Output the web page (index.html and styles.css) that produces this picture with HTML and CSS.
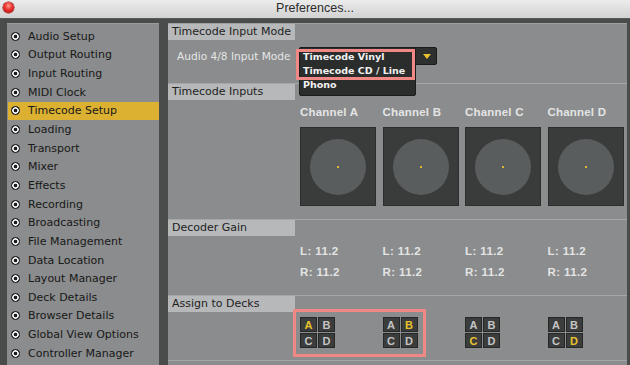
FILE: index.html
```html
<!DOCTYPE html>
<html>
<head>
<meta charset="utf-8">
<link rel="stylesheet" href="styles.css">
</head>
<body>
<div class="titlebar">
  <span class="close"></span>
  <span class="title">Preferences...</span>
</div>
<div class="main">
  <ul class="sidebar">
    <li><i class="radio"></i>Audio Setup</li>
    <li><i class="radio"></i>Output Routing</li>
    <li><i class="radio"></i>Input Routing</li>
    <li><i class="radio"></i>MIDI Clock</li>
    <li class="active"><i class="radio"></i>Timecode Setup</li>
    <li><i class="radio"></i>Loading</li>
    <li><i class="radio"></i>Transport</li>
    <li><i class="radio"></i>Mixer</li>
    <li><i class="radio"></i>Effects</li>
    <li><i class="radio"></i>Recording</li>
    <li><i class="radio"></i>Broadcasting</li>
    <li><i class="radio"></i>File Management</li>
    <li><i class="radio"></i>Data Location</li>
    <li><i class="radio"></i>Layout Manager</li>
    <li><i class="radio"></i>Deck Details</li>
    <li><i class="radio"></i>Browser Details</li>
    <li><i class="radio"></i>Global View Options</li>
    <li><i class="radio"></i>Controller Manager</li>
  </ul>
  <div class="content">
    <section class="sec sec-mode">
      <div class="sec-head">Timecode Input Mode</div>
      <div class="mode-row">
        <span class="mode-label">Audio 4/8 Input Mode</span>
        <div class="select">
          <span class="arrow"></span>
          <ul class="menu">
            <li>Timecode Vinyl</li>
            <li>Timecode CD / Line</li>
            <li>Phono</li>
          </ul>
          <div class="mark mark-menu"></div>
        </div>
      </div>
    </section>
    <section class="sec sec-inputs">
      <div class="sec-head">Timecode Inputs</div>
      <div class="cols">
        <div class="col"><div class="ch">Channel A</div><div class="scope"><div class="disc"><i></i></div></div></div>
        <div class="col"><div class="ch">Channel B</div><div class="scope"><div class="disc"><i></i></div></div></div>
        <div class="col"><div class="ch">Channel C</div><div class="scope"><div class="disc"><i></i></div></div></div>
        <div class="col"><div class="ch">Channel D</div><div class="scope"><div class="disc"><i></i></div></div></div>
      </div>
    </section>
    <section class="sec sec-gain">
      <div class="sec-head">Decoder Gain</div>
      <div class="cols gain">
        <div class="col"><div>L: 11.2</div><div>R: 11.2</div></div>
        <div class="col"><div>L: 11.2</div><div>R: 11.2</div></div>
        <div class="col"><div>L: 11.2</div><div>R: 11.2</div></div>
        <div class="col"><div>L: 11.2</div><div>R: 11.2</div></div>
      </div>
    </section>
    <section class="sec sec-assign">
      <div class="sec-head">Assign to Decks</div>
      <div class="cols decks">
        <div class="mark mark-decks"></div>
        <div class="col"><div class="grid"><b class="on">A</b><b>B</b><b>C</b><b>D</b></div></div>
        <div class="col"><div class="grid"><b>A</b><b class="on">B</b><b>C</b><b>D</b></div></div>
        <div class="col"><div class="grid"><b>A</b><b>B</b><b class="on">C</b><b>D</b></div></div>
        <div class="col"><div class="grid"><b>A</b><b>B</b><b>C</b><b class="on">D</b></div></div>
      </div>
    </section>
  </div>
</div>
</body>
</html>
```
FILE: styles.css
```css
* { box-sizing: border-box; }
html, body { margin: 0; padding: 0; }
body {
  width: 630px;
  height: 365px;
  overflow: hidden;
  background: #4a4b4b;
  font-family: "DejaVu Sans", "Liberation Sans", sans-serif;
}
.titlebar {
  height: 19px;
  background: linear-gradient(#ececec, #d2d2d2);
  border-bottom: 1px solid #5a5a5a;
  display: flex;
  align-items: center;
  justify-content: center;
  position: relative;
}
.close {
  position: absolute;
  left: 3px;
  top: 2px;
  width: 11px;
  height: 11px;
  border-radius: 50%;
  background: radial-gradient(circle at 50% 35%, #ff9a8a 0, #e8302a 45%, #a80e0c 100%);
  box-shadow: 0 0 0 0.5px #7a1010;
}
.title {
  font-family: "Liberation Sans", sans-serif;
  font-size: 12.5px;
  color: #2c2c2c;
  margin-top: -2px;
}
.main {
  display: flex;
  padding-top: 4px;
  height: 346px;
}
.sidebar {
  list-style: none;
  margin: 0 0 0 7px;
  padding: 3px 0 0 1px;
  width: 152px;
  background: #8a8c8d;
  border-top: 1px solid #9a9c9d;
}
.sidebar li {
  height: 18.65px;
  display: flex;
  align-items: center;
  font-size: 11px;
  color: #181818;
  padding-left: 3px;
}
.sidebar li.active { background: #dcb132; }
.radio {
  width: 9px;
  height: 9px;
  border-radius: 50%;
  background: radial-gradient(circle, #1c1c1c 0 1.6px, #f4f4f4 2.1px 3px, #2a2a2a 3.5px);
  margin-right: 8px;
  flex: none;
}
.content {
  margin-left: 9px;
  margin-right: 3px;
  flex: 1;
  background: #8a8c8d;
  border-top: 1px solid #9d9fa0;
}
.sec { border-top: 1px solid #a4a6a7; position: relative; }
.sec:first-child { border-top: none; }
.sec-head {
  width: 127px;
  height: 16px;
  background: #b6b8b9;
  font-size: 11px;
  color: #1e1e1e;
  padding-left: 4px;
  line-height: 16px;
}
.sec-mode { height: 59px; }
.sec-inputs { height: 136px; }
.sec-gain { height: 76px; }
.sec-assign { height: 66px; border-bottom: 1px solid #a4a6a7; }
.mode-row {
  display: flex;
  align-items: center;
  padding: 7px 0 0 9px;
}
.mode-label {
  font-size: 10.6px;
  color: #e6e6e6;
  width: 122px;
}
.select {
  position: relative;
  width: 138px;
  height: 18px;
  background: #2e2f2f;
  border: 1px solid #1a1a1a;
  border-radius: 2px;
}
.arrow {
  position: absolute;
  right: 5px;
  top: 6px;
  width: 0; height: 0;
  border-left: 4px solid transparent;
  border-right: 4px solid transparent;
  border-top: 5px solid #e8c22c;
}
.menu {
  position: absolute;
  left: -1px;
  top: -1px;
  width: 117px;
  margin: 0;
  padding: 2px 0 3px 0;
  list-style: none;
  background: #2b2c2c;
  border: 1px solid #1b1b1b;
  border-radius: 2px;
  z-index: 2;
}
.menu li {
  font-family: "DejaVu Sans", sans-serif;
  font-weight: bold;
  font-size: 9.5px;
  color: #f2f2f2;
  height: 14px;
  line-height: 14px;
  padding-left: 3px;
}
.mark {
  position: absolute;
  border: 3px solid #f08886;
  z-index: 3;
  pointer-events: none;
}
.mark-menu { left: -4px; top: 1px; width: 119px; height: 31px; }
.cols {
  display: grid;
  grid-template-columns: repeat(4, 76px);
  column-gap: 6.5px;
  margin-left: 132px;
  position: relative;
}
.ch {
  font-family: "Liberation Sans", sans-serif;
  font-size: 11.5px;
  font-weight: bold;
  color: #e4e4e4;
  height: 27px;
  padding-top: 6px;
  letter-spacing: 0.2px;
}
.scope {
  width: 76px;
  height: 79px;
  background: #3a3b3b;
  border: 1px solid #2c2d2d;
  display: flex;
  align-items: center;
  justify-content: center;
}
.disc {
  width: 56px;
  height: 56px;
  border-radius: 50%;
  background: #5a5d5e;
  display: flex;
  align-items: center;
  justify-content: center;
}
.disc i { width: 2px; height: 2px; background: #e0b830; }
.gain { padding-top: 8px; }
.gain .col div {
  font-family: "Liberation Sans", sans-serif;
  font-size: 11.5px;
  font-weight: bold;
  color: #e4e4e4;
  height: 21px;
  line-height: 14px;
  letter-spacing: 0.4px;
}
.decks { padding-top: 5px; }
.mark-decks { left: -7px; top: -3px; width: 133px; height: 48px; }
.grid {
  display: grid;
  grid-template-columns: 17px 17px;
  grid-auto-rows: 15px;
  gap: 1px;
}
.grid b {
  background: #3b3c3c;
  border: 1px solid #262727;
  color: #c4c4c4;
  font-family: "Liberation Sans", sans-serif;
  font-size: 11px;
  font-weight: bold;
  display: flex;
  align-items: center;
  justify-content: center;
}
.grid b.on { color: #e8c22c; }
```
